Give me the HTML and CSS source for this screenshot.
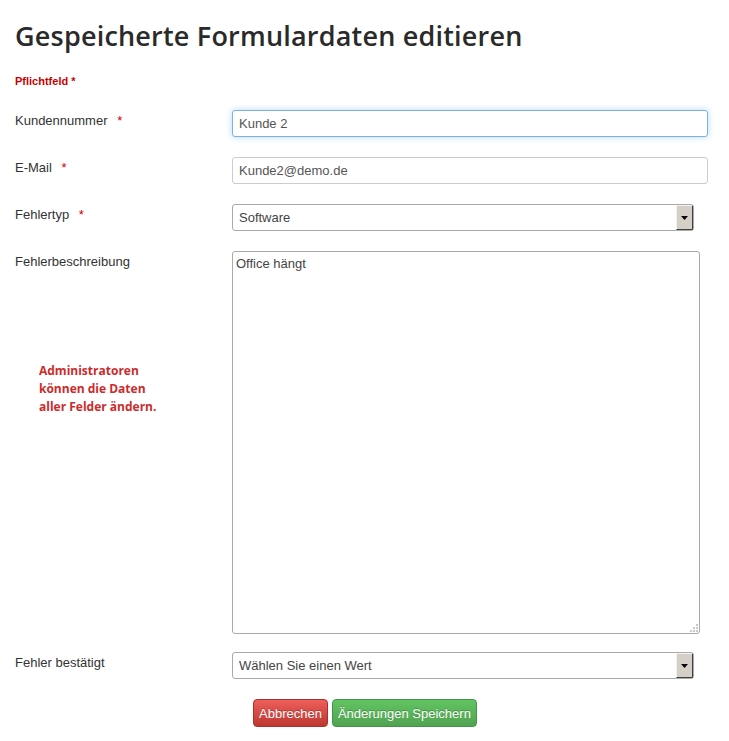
FILE: index.html
```html
<!DOCTYPE html>
<html lang="de">
<head>
<meta charset="utf-8">
<title>Gespeicherte Formulardaten editieren</title>
<link rel="stylesheet" href="styles.css">
</head>
<body>
<div class="page">
  <h1 class="title">Gespeicherte Formulardaten editieren</h1>
  <p class="required-note">Pflichtfeld *</p>
  <form class="form">
    <div class="row">
      <label class="label">Kundennummer <span class="star">*</span></label>
      <div class="field"><input class="input input-wide focused" type="text" value="Kunde 2"></div>
    </div>
    <div class="row">
      <label class="label">E-Mail <span class="star">*</span></label>
      <div class="field"><input class="input input-wide" type="text" value="Kunde2@demo.de"></div>
    </div>
    <div class="row">
      <label class="label">Fehlertyp <span class="star">*</span></label>
      <div class="field">
        <div class="select-wrap">
          <select class="select"><option>Software</option></select>
          <span class="select-arrow"><svg width="7" height="4" viewBox="0 0 7 4"><path d="M0 0H7L3.5 4Z" fill="#000"/></svg></span>
        </div>
      </div>
    </div>
    <div class="row row-area">
      <div class="label-col">
        <label class="label">Fehlerbeschreibung</label>
        <p class="admin-note">Administratoren<br>können die Daten<br>aller Felder ändern.</p>
      </div>
      <div class="field">
        <div class="area-wrap">
          <textarea class="area">Office hängt</textarea>
          <svg class="grip" width="9" height="9" viewBox="0 0 9 9">
            <rect x="7" y="1" width="2" height="2" fill="#c8c8c8"/>
            <rect x="4" y="4" width="2" height="2" fill="#c8c8c8"/>
            <rect x="7" y="4" width="2" height="2" fill="#c8c8c8"/>
            <rect x="1" y="7" width="2" height="2" fill="#c8c8c8"/>
            <rect x="4" y="7" width="2" height="2" fill="#c8c8c8"/>
            <rect x="7" y="7" width="2" height="2" fill="#c8c8c8"/>
          </svg>
        </div>
      </div>
    </div>
    <div class="row">
      <label class="label">Fehler bestätigt</label>
      <div class="field">
        <div class="select-wrap">
          <select class="select"><option>Wählen Sie einen Wert</option></select>
          <span class="select-arrow"><svg width="7" height="4" viewBox="0 0 7 4"><path d="M0 0H7L3.5 4Z" fill="#000"/></svg></span>
        </div>
      </div>
    </div>
    <div class="actions">
      <button type="button" class="btn btn-danger">Abbrechen</button>
      <button type="button" class="btn btn-success">Änderungen Speichern</button>
    </div>
  </form>
</div>
</body>
</html>
```
FILE: styles.css
```css
html, body {
  margin: 0;
  padding: 0;
  background: #fff;
}
body {
  font-family: "Liberation Sans", Arial, sans-serif;
  font-size: 13px;
  color: #333;
}
.page {
  padding: 17px 0 0 15px;
}
.title {
  margin: 0;
  font-family: "Open Sans", sans-serif;
  font-weight: 600;
  font-size: 27px;
  line-height: 37px;
  color: #2a2a2a;
  letter-spacing: 0.2px;
}
.required-note {
  margin: 20px 0 0 0;
  font-size: 11px;
  font-weight: bold;
  color: #cc0000;
  line-height: 14px;
}
.form {
  margin-top: 22px;
}
.row {
  display: flex;
  align-items: flex-start;
  margin-bottom: 20px;
}
.label, .label-col {
  width: 217px;
  flex: none;
}
.label {
  display: block;
  padding-top: 3px;
  line-height: 16px;
  color: #333;
}
.star {
  color: #cc0000;
  margin-left: 6px;
}
.field {
  flex: none;
}
.input {
  box-sizing: border-box;
  height: 27px;
  border: 1px solid #ccc;
  border-radius: 3px;
  padding: 0 6px;
  font-family: "Liberation Sans", Arial, sans-serif;
  font-size: 13px;
  color: #555;
  outline: none;
  background: #fff;
}
.input-wide {
  width: 476px;
}
.input.focused {
  border-color: #7fb2dc;
  box-shadow: 0 0 6px rgba(82, 168, 236, 0.45);
}
.select-wrap {
  position: relative;
  width: 462px;
  height: 27px;
}
.select {
  -webkit-appearance: none;
  appearance: none;
  box-sizing: border-box;
  width: 462px;
  height: 27px;
  border: 1px solid #aaa;
  border-radius: 3px;
  padding: 0 6px;
  font-family: "Liberation Sans", Arial, sans-serif;
  font-size: 13px;
  color: #444;
  background: #fff;
  outline: none;
}
.select-arrow {
  position: absolute;
  top: 1px;
  right: 1px;
  width: 15px;
  height: 23px;
  display: flex;
  align-items: center;
  justify-content: center;
  background: #d4d0c8;
  border-top: 1px solid #f4f3ef;
  border-left: 1px solid #f4f3ef;
  border-right: 1px solid #404040;
  border-bottom: 1px solid #404040;
  pointer-events: none;
}
.area-wrap {
  position: relative;
  width: 468px;
  height: 383px;
}
.area {
  box-sizing: border-box;
  width: 468px;
  height: 383px;
  border: 1px solid #aaa;
  border-radius: 3px;
  padding: 4px 3px;
  font-family: "Liberation Sans", Arial, sans-serif;
  font-size: 13px;
  line-height: 16px;
  color: #444;
  resize: none;
  outline: none;
  display: block;
}
.grip {
  position: absolute;
  right: 2px;
  bottom: 2px;
}
.admin-note {
  margin: 92px 0 0 24px;
  font-family: "Open Sans", sans-serif;
  font-weight: 700;
  font-size: 12px;
  line-height: 18px;
  color: #cc2b2b;
}
.row-area {
  margin-bottom: 18px;
}
.actions {
  display: flex;
  gap: 4px;
  padding-left: 238px;
}
.btn {
  height: 28px;
  padding: 0 5px;
  border-radius: 4px;
  font-family: "Liberation Sans", Arial, sans-serif;
  font-size: 13px;
  color: #fff;
  cursor: pointer;
  text-shadow: 0 -1px 0 rgba(0, 0, 0, 0.25);
}
.btn-danger {
  background: linear-gradient(#ee5f5b, #bd362f);
  border: 1px solid #a8322b;
}
.btn-success {
  background: linear-gradient(#62c462, #51a351);
  border: 1px solid #46914a;
}
```
